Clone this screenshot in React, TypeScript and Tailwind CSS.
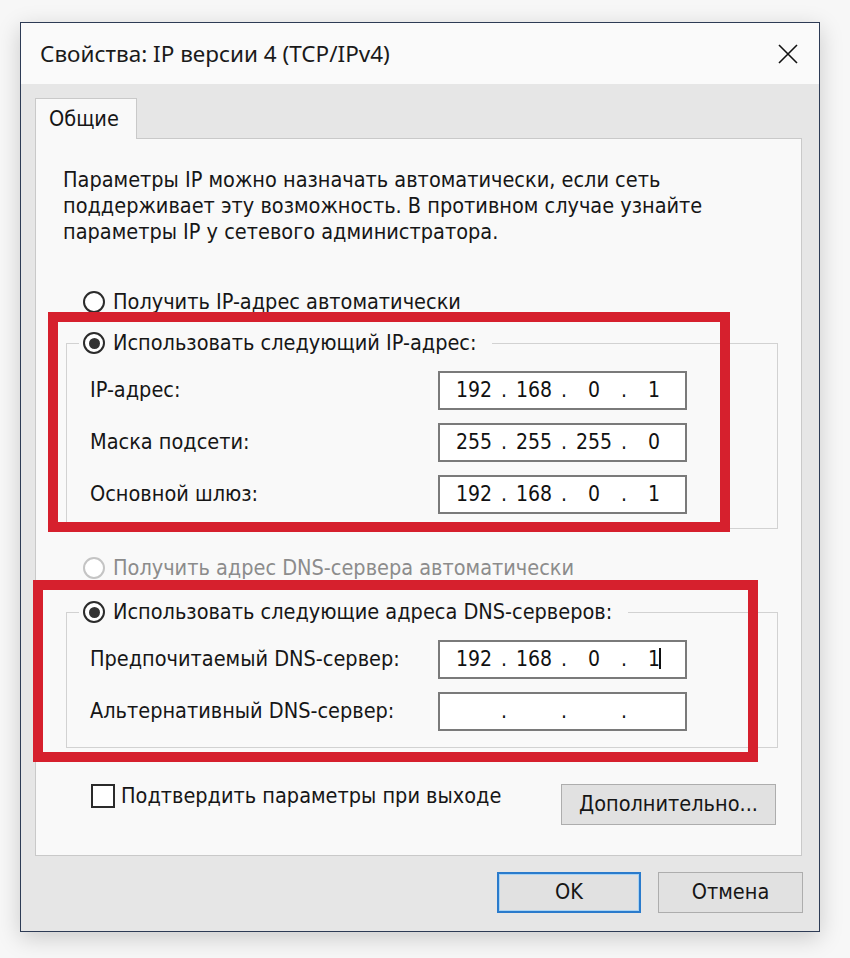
import { ReactNode } from "react";

const tahoma = "font-['DejaVu_Sans_Condensed','DejaVu_Sans',sans-serif]";

function Radio({ checked, disabled }: { checked?: boolean; disabled?: boolean }) {
  return (
    <span
      className={`w-[22px] h-[22px] shrink-0 rounded-full border-2 bg-white flex items-center justify-center ${
        disabled ? "border-[#c4c4c4]" : "border-[#2b2b2b]"
      }`}
    >
      {checked && <span className="w-[11px] h-[11px] rounded-full bg-[#333]" />}
    </span>
  );
}

function IpField({ parts, cursor }: { parts: string[]; cursor?: boolean }) {
  return (
    <div className="w-[249px] h-[39px] border-2 border-[#7a7a7a] bg-white flex items-center pl-[6px] text-[21px] text-[#111]">
      {parts.map((p, i) => (
        <div key={i} className="flex items-center">
          <span className="w-[56px] text-center relative">
            {p}
            {cursor && i === 3 && (
              <span className="absolute top-[4px] left-[33px] w-[2px] h-[21px] bg-[#111]" />
            )}
          </span>
          {i < 3 && <span className="w-[4px] flex justify-center">.</span>}
        </div>
      ))}
    </div>
  );
}

function Row({ label, children }: { label: string; children: ReactNode }) {
  return (
    <div className="flex items-center h-[39px]">
      <span className="w-[348px]">{label}</span>
      {children}
    </div>
  );
}

function Group({ legend, children, pb }: { legend: string; children: ReactNode; pb: string }) {
  return (
    <fieldset className="ml-[30px] w-[712px] border border-[#d2d2d2]">
      <legend className="ml-[12px] pl-[4px] pr-[16px]">
        <span className="flex items-center gap-[8px] h-[26px]">
          <Radio checked />
          <span>{legend}</span>
        </span>
      </legend>
      <div className={`pl-[23px] pt-[15px] flex flex-col gap-[13px] ${pb}`}>{children}</div>
    </fieldset>
  );
}

export default function App() {
  return (
    <div className={`relative w-[850px] h-[958px] bg-[#f7f7f7] pl-[20px] pt-[22px] ${tahoma} text-[21.5px] text-[#161616]`}>
      {/* Dialog window */}
      <div className="w-[800px] h-[910px] border border-[#2d3b55] bg-[#e6e6e6] flex flex-col shadow-[0_6px_22px_rgba(0,0,0,0.18)]">
        <div className="h-[61px] shrink-0 bg-[#fafafa] flex items-center justify-between pl-[19px] pr-[21px]">
          <span className="font-['Noto_Sans',sans-serif] text-[22.5px] text-[#1a1a1a]">
            Свойства: IP версии 4 (TCP/IPv4)
          </span>
          <svg width="20" height="20" viewBox="0 0 20 20" stroke="#111" strokeWidth="1.6">
            <path d="M1 1 L19 19 M19 1 L1 19" />
          </svg>
        </div>

        <div className="flex-1 flex flex-col px-[14px] pt-[14px]">
          {/* Tab */}
          <div className="relative z-10 w-[102px] h-[41px] -mb-px border border-b-0 border-[#c9c9c9] bg-[#f9f9f9] pl-[13px] flex items-center">
            Общие
          </div>

          {/* Panel */}
          <div className="w-[767px] h-[718px] border border-[#c9c9c9] bg-[#f9f9f9] flex flex-col">
            <p className="ml-[27px] mt-[28px] leading-[26px]">
              Параметры IP можно назначать автоматически, если сеть
              <br />
              поддерживает эту возможность. В противном случае узнайте
              <br />
              параметры IP у сетевого администратора.
            </p>

            <div className="ml-[47px] mt-[44px] h-[26px] flex items-center gap-[8px]">
              <Radio />
              <span>Получить IP-адрес автоматически</span>
            </div>

            <div className="mt-[15px]">
              <Group legend="Использовать следующий IP-адрес:" pb="pb-[14px]">
                <Row label="IP-адрес:">
                  <IpField parts={["192", "168", "0", "1"]} />
                </Row>
                <Row label="Маска подсети:">
                  <IpField parts={["255", "255", "255", "0"]} />
                </Row>
                <Row label="Основной шлюз:">
                  <IpField parts={["192", "168", "0", "1"]} />
                </Row>
              </Group>
            </div>

            <div className="ml-[47px] mt-[26px] h-[26px] flex items-center gap-[8px] text-[#8c8c8c]">
              <Radio disabled />
              <span>Получить адрес DNS-сервера автоматически</span>
            </div>

            <div className="mt-[18px]">
              <Group legend="Использовать следующие адреса DNS-серверов:" pb="pb-[16px]">
                <Row label="Предпочитаемый DNS-сервер:">
                  <IpField parts={["192", "168", "0", "1"]} cursor />
                </Row>
                <Row label="Альтернативный DNS-сервер:">
                  <IpField parts={["", "", "", ""]} />
                </Row>
              </Group>
            </div>

            <div className="mt-[36px] flex items-start justify-between">
              <div className="ml-[55px] -mt-px flex items-center gap-[6px]">
                <span className="w-[24px] h-[24px] border-2 border-[#2b2b2b] bg-white" />
                <span className="leading-[26px]">Подтвердить параметры при выходе</span>
              </div>
              <button className="mr-[25px] w-[215px] h-[41px] border border-[#adadad] bg-[#e1e1e1] flex items-center justify-center">
                Дополнительно...
              </button>
            </div>
          </div>

          {/* Dialog buttons */}
          <div className="mt-[16px] flex justify-end gap-[17px] pr-[2px]">
            <button className="w-[144px] h-[41px] border-2 border-[#2a7bcc] bg-[#e1e1e1] shadow-[inset_0_0_0_1px_#a9d3f3] flex items-center justify-center">
              OK
            </button>
            <button className="w-[145px] h-[41px] border border-[#adadad] bg-[#e1e1e1] flex items-center justify-center">
              Отмена
            </button>
          </div>
        </div>
      </div>

      {/* Red highlight annotations */}
      <div className="absolute left-[48px] top-[312px] w-[682px] h-[220px] border-[10px] border-[#d6202d] pointer-events-none" />
      <div className="absolute left-[33px] top-[580px] w-[725px] h-[182px] border-[10px] border-[#d6202d] pointer-events-none" />
    </div>
  );
}
